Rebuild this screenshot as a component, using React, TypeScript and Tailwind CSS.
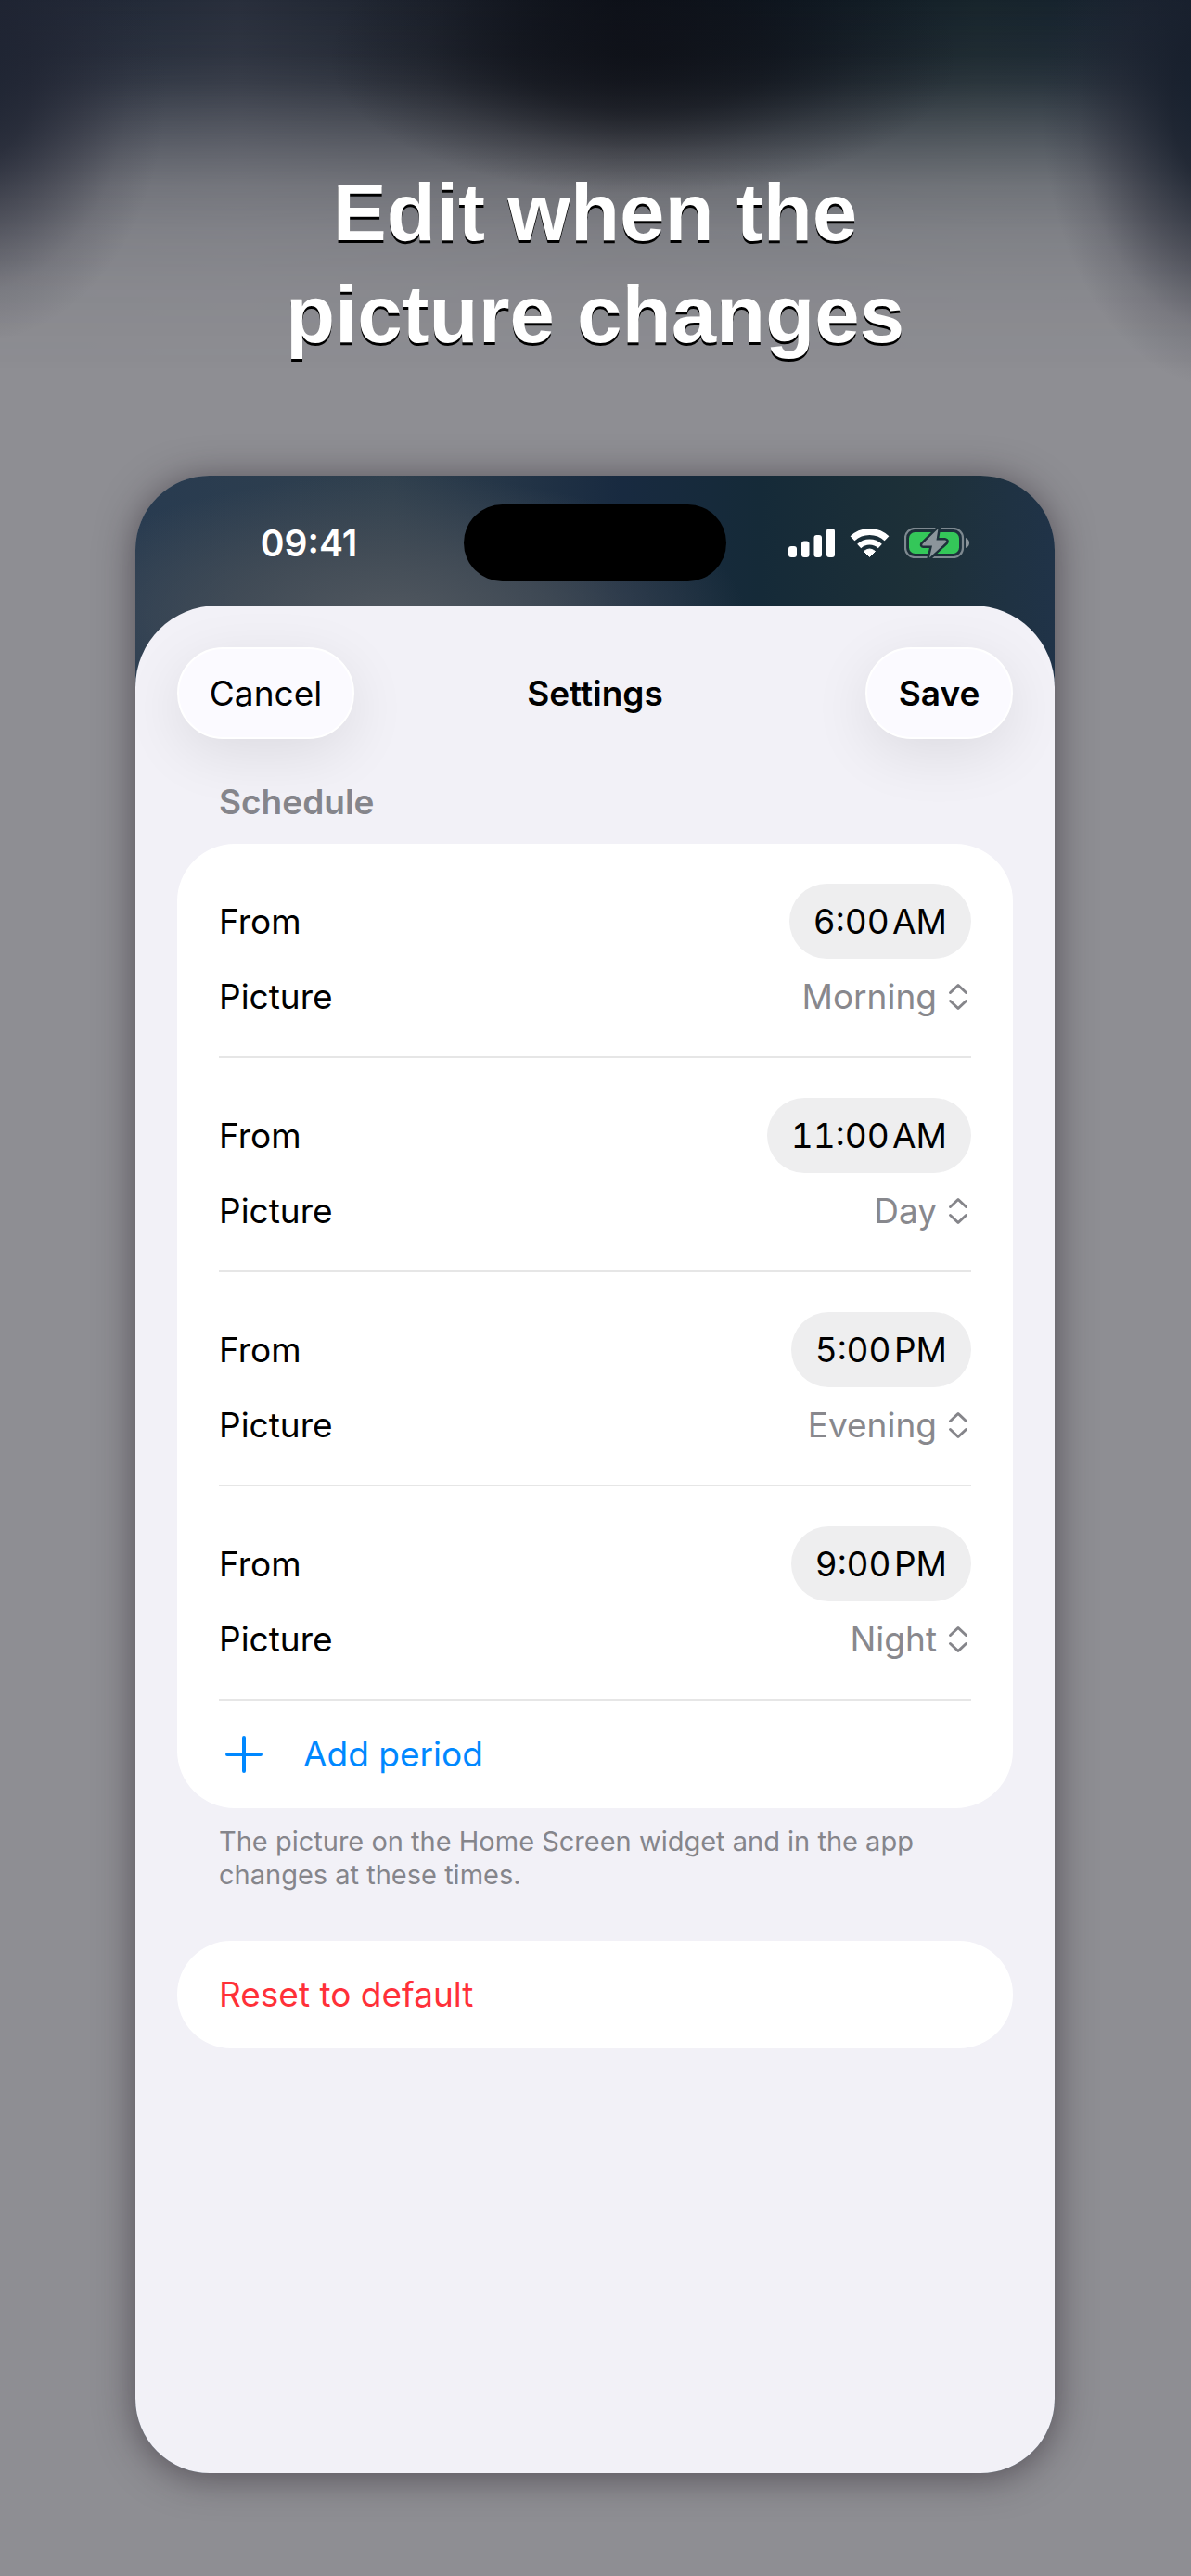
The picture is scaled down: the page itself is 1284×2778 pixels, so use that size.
import { useState } from 'react'

const pictures = ['Morning', 'Day', 'Evening', 'Night']

const initialPeriods = [
    { from: '6:00\u200aAM', picture: 'Morning' },
    { from: '11:00\u200aAM', picture: 'Day' },
    { from: '5:00\u200aPM', picture: 'Evening' },
    { from: '9:00\u200aPM', picture: 'Night' }
]

function Backdrop() {
    return (
        <div aria-hidden="true" className="pointer-events-none absolute inset-x-0 top-0 -z-10 h-[480px] overflow-hidden">
            <div className="absolute inset-0 bg-[linear-gradient(90deg,#1a2433_0%,#282e3b_20%,#1c222d_36%,#0b1019_52%,#0d1822_66%,#17242b_82%,#142130_100%)] [mask-image:linear-gradient(180deg,#000_0,rgba(0,0,0,.93)_60px,rgba(0,0,0,.83)_90px,rgba(0,0,0,.67)_120px,rgba(0,0,0,.45)_160px,rgba(0,0,0,.25)_200px,rgba(0,0,0,.12)_250px,rgba(0,0,0,.05)_310px,transparent_400px)]" />
            <div className="absolute inset-0 bg-[radial-gradient(ellipse_210px_280px_at_-30px_90px,rgba(30,36,50,.95)_0%,rgba(32,36,50,.8)_30%,rgba(36,38,52,.45)_58%,rgba(40,40,54,.15)_80%,transparent_100%)]" />
            <div className="absolute inset-0 bg-[radial-gradient(ellipse_200px_310px_at_103%_110px,rgba(20,31,45,.95)_0%,rgba(24,31,44,.85)_30%,rgba(32,35,48,.5)_58%,rgba(40,40,54,.17)_80%,transparent_100%)]" />
            <div className="absolute inset-0 bg-[radial-gradient(ellipse_340px_150px_at_54%_60px,rgba(14,16,23,.8)_0%,rgba(15,17,24,.6)_40%,rgba(18,19,26,.25)_70%,transparent_100%)]" />
        </div>
    )
}

function SignalIcon() {
    return (
        <svg className="h-[31px] w-[50px]" viewBox="0 0 50 31" fill="#fff">
            <rect x="0" y="19" width="9" height="12" rx="3" />
            <rect x="14" y="13.500" width="8.500" height="17.500" rx="3" />
            <rect x="27.500" y="7" width="8.500" height="24" rx="3" />
            <rect x="41" y="0" width="9" height="31" rx="3" />
        </svg>
    )
}

function WifiIcon() {
    return (
        <svg className="h-[31px] w-[43px]" viewBox="0 0 43 31">
            <path d="M3 10.800a27 27 0 0 1 37 0" fill="none" stroke="#fff" strokeWidth="7" />
            <path d="M10.200 19a16.500 16.500 0 0 1 22.600 0" fill="none" stroke="#fff" strokeWidth="6" />
            <path d="M21.500 30.500l-6-6q6-5 12 0z" fill="#fff" stroke="#fff" strokeWidth="1" strokeLinejoin="round" />
        </svg>
    )
}

function BatteryIcon() {
    const bolt = 'M36.500 1L19.500 17.800Q18.800 19.500 20.500 19.600H30L27 32.500L45 15.800Q46 14 44 13.600H34.500Z'

    return (
        <svg className="h-[33px] w-[70px]" viewBox="0 0 70 33">
            <defs>
                <mask id="bolt-gap">
                    <rect width="70" height="33" fill="#fff" />
                    <path d={bolt} fill="#000" stroke="#000" strokeWidth="5" strokeLinejoin="round" />
                </mask>
            </defs>
            <g mask="url(#bolt-gap)">
                <rect x="1" y="1" width="62" height="31" rx="10" fill="none" stroke="#7e8990" strokeWidth="2.200" />
                <rect x="5" y="5" width="54" height="23" rx="6.500" fill="#34c759" />
            </g>
            <path d="M66 11q4 1.500 4 5.500t-4 5.500z" fill="#8b959b" />
            <path d={bolt} fill="#8b959b" />
        </svg>
    )
}

function StatusBar() {
    return (
        <div className="grid grid-cols-[1fr_283px_1fr] items-center pt-[31px] pb-[26px]">
            <div className="pl-5 text-center text-[39px] leading-none font-semibold text-white">09:41</div>
            <div className="h-[83px] rounded-full bg-black" />
            <div className="flex items-center justify-center gap-4 pr-[26px]">
                <SignalIcon />
                <WifiIcon />
                <BatteryIcon />
            </div>
        </div>
    )
}

function UpDownIcon() {
    return (
        <svg
            className="h-[30px] w-[22px]"
            viewBox="0 0 22 30"
            fill="none"
            stroke="#85858a"
            strokeWidth="3"
            strokeLinecap="round"
            strokeLinejoin="round"
        >
            <path d="M2.500 10.500L11 2.500L19.500 10.500" />
            <path d="M2.500 19.500L11 27.500L19.500 19.500" />
        </svg>
    )
}

export default function App() {
    const [periods, setPeriods] = useState(initialPeriods)

    const changePicture = (index: number, picture: string) => {
        setPeriods(periods.map((p, i) => (i === index ? { ...p, picture } : p)))
    }

    const addPeriod = () => {
        setPeriods([...periods, { from: '12:00\u200aAM', picture: 'Night' }])
    }

    return (
        <main className="relative isolate flex min-h-screen flex-col bg-[#8e8e93] pt-[174px] pr-[147px] pb-[111px] pl-[146px] font-['Inter',sans-serif] text-[37px] text-black">
            <Backdrop />

            <h1 className="mb-[119px] text-center font-['Liberation_Sans',sans-serif] text-[87px] leading-[110px] font-bold text-white [text-shadow:0_3px_0_#000]">
                Edit when the
                <br />
                picture changes
            </h1>

            {/* Phone */}
            <div className="flex flex-1 flex-col overflow-hidden rounded-[80px] bg-[radial-gradient(ellipse_380px_150px_at_28%_150px,#50575f_0%,rgba(72,80,89,.75)_45%,transparent_100%),linear-gradient(90deg,#283b50_0%,#30404e_28%,#182a40_53%,#152a38_68%,#1d3038_85%,#203348_100%)] shadow-[0_4px_40px_rgba(35,25,35,0.55)]">
                <StatusBar />

                <div className="flex flex-1 flex-col rounded-t-[88px] bg-[#f2f1f7] px-[45px] pt-[45px]">
                    <header className="grid grid-cols-[1fr_auto_1fr] items-center">
                        <button
                            type="button"
                            className="h-[99px] w-[191px] justify-self-start rounded-full border-2 border-white bg-[#fbfaff] shadow-[0_16px_64px_rgba(0,0,0,0.09)]"
                        >
                            Cancel
                        </button>
                        <h2 className="font-semibold">Settings</h2>
                        <button
                            type="button"
                            className="h-[99px] w-[159px] justify-self-end rounded-full border-2 border-white bg-[#fbfaff] font-semibold shadow-[0_16px_64px_rgba(0,0,0,0.09)]"
                        >
                            Save
                        </button>
                    </header>

                    {/* Schedule */}
                    <section className="mt-11">
                        <h3 className="mb-[21px] px-[45px] leading-[48px] font-semibold text-[#85858b]">Schedule</h3>

                        <div className="rounded-[62px] bg-white px-[45px]">
                            {periods.map((period, i) => (
                                <div key={i} className="border-b-2 border-[#e6e6e6] pt-[43px] pb-6">
                                    <div className="flex h-[81px] items-center justify-between">
                                        <label htmlFor={`from-${i}`}>From</label>
                                        <button
                                            id={`from-${i}`}
                                            type="button"
                                            className="h-[81px] rounded-full bg-[#eeeeef] px-[26px] tabular-nums"
                                        >
                                            {period.from}
                                        </button>
                                    </div>
                                    <div className="flex h-[81px] items-center justify-between">
                                        <label htmlFor={`picture-${i}`}>Picture</label>
                                        <div className="flex items-center gap-3 pr-[3px]">
                                            <select
                                                id={`picture-${i}`}
                                                value={period.picture}
                                                onChange={(e) => changePicture(i, e.target.value)}
                                                className="appearance-none bg-transparent text-right text-[#88888d] [field-sizing:content]"
                                            >
                                                {pictures.map((name) => (
                                                    <option key={name}>{name}</option>
                                                ))}
                                            </select>
                                            <UpDownIcon />
                                        </div>
                                    </div>
                                </div>
                            ))}

                            <button
                                type="button"
                                onClick={addPeriod}
                                className="flex h-[116px] w-full items-center gap-11 pl-[7px] text-[#0088ff]"
                            >
                                <svg
                                    className="size-[40px]"
                                    viewBox="0 0 40 40"
                                    stroke="currentColor"
                                    strokeWidth="4"
                                    strokeLinecap="round"
                                >
                                    <path d="M20 2V38M2 20H38" />
                                </svg>
                                Add period
                            </button>
                        </div>

                        <p className="mt-[18px] px-[45px] text-[29px] leading-9 text-[#85858b]">
                            The picture on the Home Screen widget and in the app changes at these times.
                        </p>
                    </section>

                    <button
                        type="button"
                        className="mt-[53px] h-[116px] rounded-full bg-white px-[45px] text-left text-[#ff3038]"
                    >
                        Reset to default
                    </button>
                </div>
            </div>
        </main>
    )
}
